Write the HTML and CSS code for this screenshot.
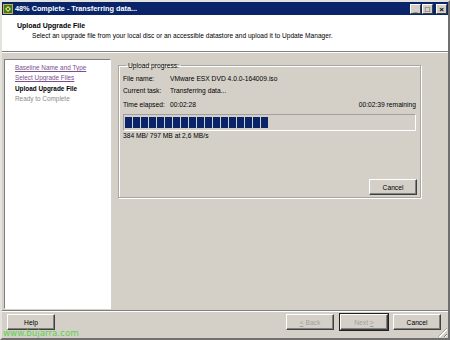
FILE: index.html
```html
<!DOCTYPE html>
<html lang="en">
<head>
    <meta charset="UTF-8">
    <title>48% Complete - Transferring data...</title>
    <link rel="stylesheet" href="styles.css">
</head>
<body>
    <div class="window">
        <div class="titlebar">
            <span class="app-icon">
                <svg width="10" height="10" viewBox="0 0 10 10">
                    <rect x="0" y="0" width="10" height="10" fill="#c8b040"/>
                    <rect x="1" y="1" width="8" height="8" fill="#3a7a2a"/>
                    <path d="M2 5 L5 2 L8 5 L5 8 Z" fill="#e8d860"/>
                    <rect x="4" y="4" width="2" height="2" fill="#3a7a2a"/>
                </svg>
            </span>
            <span class="title">48% Complete - Transferring data...</span>
            <div class="caption-buttons">
                <span class="cap-btn">_</span>
                <span class="cap-btn">&#9633;</span>
                <span class="cap-btn">&#215;</span>
            </div>
        </div>

        <div class="header">
            <h1>Upload Upgrade File</h1>
            <p>Select an upgrade file from your local disc or an accessible datastore and upload it to Update Manager.</p>
        </div>

        <div class="main">
            <ul class="steps">
                <li class="done">Baseline Name and Type</li>
                <li class="done">Select Upgrade Files</li>
                <li class="current">Upload Upgrade File</li>
                <li class="todo">Ready to Complete</li>
            </ul>

            <div class="content">
                <fieldset class="group">
                    <legend>Upload progress:</legend>
                    <div class="row first"><span class="lbl">File name:</span><span>VMware ESX DVD 4.0.0-164009.iso</span></div>
                    <div class="row"><span class="lbl">Current task:</span><span>Transferring data...</span></div>
                    <div class="row time"><span class="lbl">Time elapsed:</span><span>00:02:28</span><span class="remaining">00:02:39 remaining</span></div>
                    <div class="progress" id="progress"></div>
                    <div class="row rate">384 MB/ 797 MB at 2,6 MB/s</div>
                    <div class="group-actions">
                        <button class="btn">Cancel</button>
                    </div>
                </fieldset>
            </div>
        </div>

        <div class="footer">
            <button class="btn">Help</button>
            <div class="nav-buttons">
                <button class="btn" disabled><u>&lt;</u> Back</button>
                <button class="btn default" disabled>Next <u>&gt;</u></button>
                <button class="btn">Cancel</button>
            </div>
        </div>

        <span class="grip"></span>
        <div class="watermark">www.bujarra.com</div>
    </div>

    <script>
        // 18 blocks drawn for 48%
        var bar = document.getElementById("progress");
        for (var i = 0; i < 18; i++) {
            var b = document.createElement("span");
            b.className = "block";
            bar.appendChild(b);
        }
    </script>
</body>
</html>
```

FILE: styles.css
```css
:root {
    --face: #d4d0c8;
    --navy: #0a246a;
    --shadow: #808080;
    --text: #000;
}

* {
    box-sizing: border-box;
    margin: 0;
    padding: 0;
}

body {
    width: 450px;
    height: 340px;
    overflow: hidden;
    font-family: "Liberation Sans", Arial, sans-serif;
    font-size: 6.7px;
    color: var(--text);
    background: var(--face);
}

.window {
    position: relative;
    width: 450px;
    height: 340px;
    display: flex;
    flex-direction: column;
    background: var(--face);
    border: 2px solid #e4e2dc;
    border-right-color: #6f6f6f;
    border-bottom-color: #6f6f6f;
}

.titlebar {
    height: 13px;
    display: flex;
    align-items: center;
    background: var(--navy);
    color: #fff;
    padding-left: 1px;
}

.app-icon {
    display: flex;
    margin-right: 2px;
}

.title {
    font-weight: bold;
    font-size: 7.3px;
    flex: 1;
}

.caption-buttons {
    display: flex;
    gap: 1px;
    margin-right: 1px;
}

.cap-btn {
    width: 11px;
    height: 10px;
    background: var(--face);
    color: #000;
    font-size: 8px;
    line-height: 9px;
    text-align: center;
    font-weight: bold;
    border: 1px solid #fff;
    border-right-color: #404040;
    border-bottom-color: #404040;
}

.cap-btn:nth-child(3) {
    margin-left: 2px;
}

.header {
    height: 37px;
    background: #fff;
    padding: 6px 0 0 15px;
    border-bottom: 1px solid var(--shadow);
    box-shadow: 0 1px 0 #fff;
}

.header h1 {
    font-size: 7px;
    font-weight: bold;
    line-height: 10px;
}

.header p {
    padding-left: 15px;
    font-size: 6.6px;
    line-height: 10px;
}

.main {
    flex: 1;
    display: flex;
    padding: 7px 4px 0 2px;
}

.steps {
    list-style: none;
    width: 107px;
    height: 250px;
    background: #fff;
    border: 1px solid var(--shadow);
    border-right-color: #fff;
    border-bottom-color: #fff;
    padding: 3px 0 0 10px;
    font-size: 6.4px;
    line-height: 10.4px;
}

.steps .done {
    color: #7b4f8e;
    text-decoration: underline;
}

.steps .current {
    font-weight: bold;
}

.steps .todo {
    color: #8a8a8a;
}

.content {
    flex: 1;
    padding: 3px 23px 0 7px;
}

.group {
    height: 136px;
    border: 1px solid #a8a6a0;
    box-shadow: 1px 1px 0 #fff inset, 1px 1px 0 #fff;
    padding: 0 3px 0 4px;
    display: flex;
    flex-direction: column;
}

.group legend {
    padding: 0 2px;
    margin-left: 3px;
    font-size: 6.7px;
}

.row {
    display: flex;
    font-size: 6.7px;
    line-height: 10px;
    margin-top: 2px;
    white-space: nowrap;
}

.row.first {
    margin-top: 5px;
}

.row.time {
    margin-top: 4px;
}

.lbl {
    width: 47px;
    flex-shrink: 0;
}

.remaining {
    margin-left: auto;
    margin-right: 1px;
}

.progress {
    height: 17px;
    margin-top: 4px;
    margin-right: 1px;
    display: flex;
    gap: 1px;
    padding: 2px 1px;
    border: 1px solid #a0a0a0;
    border-right-color: #fff;
    border-bottom-color: #fff;
}

.block {
    width: 7px;
    background: var(--navy);
}

.rate {
    margin-top: 0;
}

.group-actions {
    margin-top: auto;
    display: flex;
    justify-content: flex-end;
    padding-bottom: 2px;
}

.btn {
    width: 48px;
    height: 16px;
    font-family: inherit;
    font-size: 6.7px;
    background: var(--face);
    color: #000;
    border: 1px solid #fff;
    border-right-color: #404040;
    border-bottom-color: #404040;
    box-shadow: inset -1px -1px 0 var(--shadow);
}

.btn:disabled {
    color: #a0a0a0;
}

.btn.default {
    outline: 1px solid #202020;
}

.footer {
    height: 28px;
    border-top: 1px solid var(--shadow);
    box-shadow: inset 0 1px 0 #fff;
    display: flex;
    align-items: flex-start;
    justify-content: space-between;
    padding: 3px 7px 0 5px;
    margin-top: 1px;
}

.nav-buttons {
    display: flex;
    gap: 6px;
}

.nav-buttons .btn:last-child {
    margin-left: -1px;
}

.grip {
    position: absolute;
    right: 1px;
    bottom: 1px;
    width: 9px;
    height: 9px;
    background: repeating-linear-gradient(135deg, transparent 0 2px, var(--shadow) 2px 3px, #fff 3px 4px);
    clip-path: polygon(100% 0, 100% 100%, 0 100%);
}

.watermark {
    position: absolute;
    left: 1px;
    bottom: 0;
    font-family: "DejaVu Sans", sans-serif;
    font-size: 8.7px;
    color: #5ad24a;
}
```
